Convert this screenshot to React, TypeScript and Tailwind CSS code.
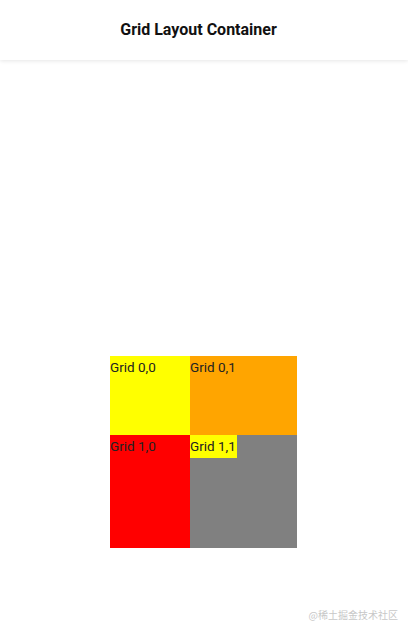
export default function App() {
  return (
    <div className="relative h-[632px] w-[408px] overflow-hidden bg-white font-['Roboto',sans-serif]">
      {/* App bar */}
      <div className="flex h-[60px] items-center justify-center bg-white pr-[11px] shadow-[0_1px_4px_rgba(0,0,0,0.1)]">
        <div className="text-[16px] font-bold text-[#111]">Grid Layout Container</div>
      </div>

      {/* Grid */}
      <div className="pl-[110px] pt-[296px]">
        <div className="grid w-[187px] grid-cols-[80px_107px] grid-rows-[79px_113px] text-[13.5px] leading-[22px] text-[#222]">
          <div className="bg-[#ffff00]">Grid 0,0</div>
          <div className="bg-[#ffa500]">Grid 0,1</div>
          <div className="bg-[#ff0000]">Grid 1,0</div>
          <div className="bg-[#808080]">
            <span className="inline-block bg-[#ffff00] pr-[1px] leading-[23px]">Grid 1,1</span>
          </div>
        </div>
      </div>

      {/* watermark */}
      <div className="absolute bottom-[10px] right-[10px] text-[10px] text-[#c8c8c8] font-['Noto_Sans_CJK_SC',sans-serif]">
        @稀土掘金技术社区
      </div>
    </div>
  );
}
